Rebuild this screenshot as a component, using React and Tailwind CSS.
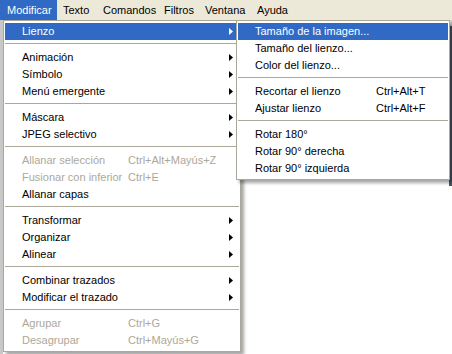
const bar = [
  { label: 'Modificar', w: 'w-[57px]', pl: 'pl-[7px]', active: true },
  { label: 'Texto', w: 'w-[40px]', pl: 'pl-[6px]' },
  { label: 'Comandos', w: 'w-[61px]', pl: 'pl-[6px]' },
  { label: 'Filtros', w: 'w-[41px]', pl: 'pl-[6px]' },
  { label: 'Ventana', w: 'w-[52px]', pl: 'pl-[6px]' },
  { label: 'Ayuda', w: 'w-[50px]', pl: 'pl-[6px]' },
]

const mainItems = [
  { label: 'Lienzo', sub: true, active: true },
  { sep: true },
  { label: 'Animación', sub: true },
  { label: 'Símbolo', sub: true },
  { label: 'Menú emergente', sub: true },
  { sep: true },
  { label: 'Máscara', sub: true },
  { label: 'JPEG selectivo', sub: true },
  { sep: true },
  { label: 'Allanar selección', key: 'Ctrl+Alt+Mayús+Z', disabled: true },
  { label: 'Fusionar con inferior', key: 'Ctrl+E', disabled: true },
  { label: 'Allanar capas' },
  { sep: true },
  { label: 'Transformar', sub: true },
  { label: 'Organizar', sub: true },
  { label: 'Alinear', sub: true },
  { sep: true },
  { label: 'Combinar trazados', sub: true },
  { label: 'Modificar el trazado', sub: true },
  { sep: true },
  { label: 'Agrupar', key: 'Ctrl+G', disabled: true },
  { label: 'Desagrupar', key: 'Ctrl+Mayús+G', disabled: true },
]

const subItems = [
  { label: 'Tamaño de la imagen...', active: true },
  { label: 'Tamaño del lienzo...' },
  { label: 'Color del lienzo...' },
  { sep: true },
  { label: 'Recortar el lienzo', key: 'Ctrl+Alt+T' },
  { label: 'Ajustar lienzo', key: 'Ctrl+Alt+F' },
  { sep: true },
  { label: 'Rotar 180°' },
  { label: 'Rotar 90° derecha' },
  { label: 'Rotar 90° izquierda' },
]

function Arrow({ white }) {
  return (
    <svg width="4" height="7" viewBox="0 0 4 7" className="absolute right-[6px] top-[5px]">
      <path d="M0 0 L4 3.5 L0 7 Z" fill={white ? '#ffffff' : '#000000'} />
    </svg>
  )
}

function Menu({ items, textPl, keyLeft }) {
  return (
    <div className="flex flex-col py-[2px] px-[1px]">
      {items.map((it, i) =>
        it.sep ? (
          <div key={i} className="h-[9px] pt-[3px]">
            <div className="h-px bg-[#aca899]" />
          </div>
        ) : (
          <div
            key={i}
            className={`relative h-[17px] leading-[17px] whitespace-nowrap ${textPl} ${
              it.active ? 'bg-[#316ac5] text-white' : it.disabled ? 'text-[#aca899]' : 'text-black'
            }`}
          >
            {it.label}
            {it.key && (
              <span className="absolute top-0" style={{ left: keyLeft }}>
                {it.key}
              </span>
            )}
            {it.sub && <Arrow white={it.active} />}
          </div>
        )
      )}
    </div>
  )
}

export default function App() {
  return (
    <div
      className="relative w-[452px] h-[354px] overflow-hidden bg-white text-[11px]"
      style={{ fontFamily: '"Liberation Sans", Arial, sans-serif' }}
    >
      {/* Menu bar */}
      <div className="flex h-[20px] bg-[#ece9d8] leading-[20px]">
        {bar.map((b) => (
          <div
            key={b.label}
            className={`${b.w} ${b.pl} shrink-0 ${b.active ? 'bg-[#316ac5] text-white' : 'text-black'}`}
          >
            {b.label}
          </div>
        ))}
      </div>

      {/* Background window */}
      <div className="flex h-[334px]">
        <div className="w-[3px] bg-[#c8c8c8]" />
        <div className="flex-1 bg-white" />
        <div className="w-[3px] flex flex-col">
          <div className="h-[6px] bg-[#d8d8d8]" />
          <div className="h-[160px] bg-[#4a5666]" />
          <div className="flex-1 bg-white" />
        </div>
      </div>

      {/* Main dropdown */}
      <div className="absolute left-[3px] top-[20px] w-[238px] h-[332px] bg-white border border-[#aca899] shadow-[3px_3px_3px_rgba(0,0,0,0.35)]">
        <Menu items={mainItems} textPl="pl-[17px]" keyLeft="123px" />
      </div>

      {/* Submenu */}
      <div className="absolute left-[236px] top-[20px] w-[214px] h-[160px] bg-white border border-[#aca899] shadow-[3px_3px_3px_rgba(0,0,0,0.35)]">
        <Menu items={subItems} textPl="pl-[17px]" keyLeft="138px" />
      </div>
    </div>
  )
}
